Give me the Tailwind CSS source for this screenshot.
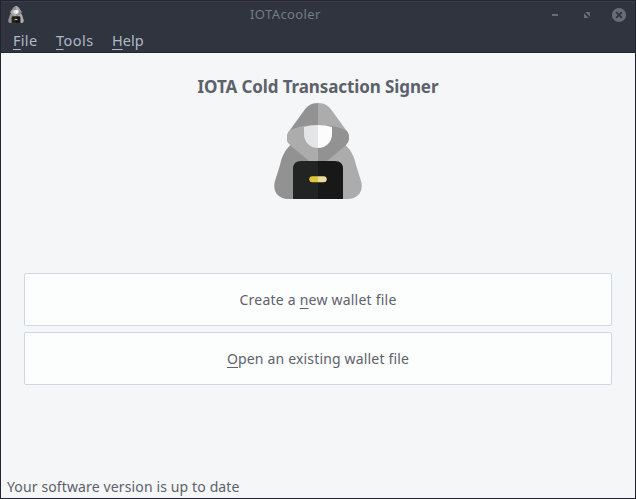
<!DOCTYPE html>
<html lang="en">
<head>
<meta charset="utf-8">
<title>IOTAcooler</title>
<script src="https://cdn.jsdelivr.net/npm/@tailwindcss/browser@4"></script>
</head>
<body class="w-[636px] h-[499px] overflow-hidden bg-[#22232e] font-['Noto_Sans',sans-serif] text-[14px] leading-5 text-[#5c616c]">
<svg class="hidden">
  <symbol id="hood" viewBox="0 0 88 96">
    <path fill="#929292" d="M44 40H19C11 46 8 53 6 62L1 78C-2 88 4 96 14 96H44Z"/>
    <path fill="#acacac" d="M44 40H69C77 46 80 53 82 62L87 78C90 88 84 96 74 96H44Z"/>
    <path fill="#929292" d="M44 0C37 0 33 3 29 9L16 27C12 32 13 36 14 40L44 30Z"/>
    <path fill="#acacac" d="M44 0C51 0 55 3 59 9L72 27C76 32 75 36 74 40L44 30Z"/>
    <path fill="#acacac" d="M44 22C31 22 22 24 15 28C12 32 12 39 17 43L35 58H44Z"/>
    <path fill="#929292" d="M44 22C57 22 66 24 73 28C76 32 76 39 71 43L53 58H44Z"/>
    <path fill="#e4e5e7" d="M44 22Q36 22 30 24V31C30 39 36 45 44 45Z"/>
    <path fill="#fcfcfd" d="M44 22Q52 22 58 24V31C58 39 52 45 44 45Z"/>
    <path fill="#222423" d="M44 58H27Q19 58 19 66V96H44Z"/>
    <path fill="#181818" d="M44 58H61Q69 58 69 66V96H44Z"/>
    <path fill="#e2c53e" d="M44 73.2H38.3A3 3 0 0 0 38.3 79.2H44Z"/>
    <path fill="#ecdc9c" d="M44 73.2H49.7A3 3 0 0 1 49.7 79.2H44Z"/>
  </symbol>
</svg>
<div class="flex h-full flex-col px-px pb-px">
  <header class="flex h-[53px] shrink-0 flex-col border-t border-b border-t-[#22232e] border-b-[#252632] bg-[#2f343f] text-[#afb8c6]">
    <div class="grid h-[26px] grid-cols-[1fr_auto_1fr] items-center border-t border-[#3a3f4a]">
      <svg class="ml-[7px] h-[17px] w-4"><use href="#hood"/></svg>
      <span class="-ml-[65px] w-[71px] pb-[2px] text-[13px] tracking-[0.4px] text-[#767b87]"><span class="whitespace-nowrap">IOTAcooler</span></span>
      <div class="flex items-center justify-end gap-4 pr-2">
        <svg class="h-4 w-4" viewBox="0 0 16 16"><path fill="#676c77" d="M5 7h6v2H5z"/></svg>
        <svg class="h-4 w-4" viewBox="0 0 16 16"><path fill="#676c77" d="M6.3 5H11v4.7zM5 6.3V11h4.7z"/></svg>
        <svg class="h-4 w-4" viewBox="0 0 16 16"><circle cx="8" cy="8" r="7.1" fill="#676c77"/><path stroke="#2f343f" stroke-width="1.8" d="M5.2 5.2l5.6 5.6M10.8 5.2l-5.6 5.6"/></svg>
      </div>
    </div>
    <nav class="flex h-[25px] items-center pl-3 text-[14.5px] tracking-[0.3px]">
      <span class="w-[43px]"><u class="underline decoration-1 underline-offset-[3px]">F</u>ile</span>
      <span class="w-14 tracking-[0.5px]"><u class="underline decoration-1 underline-offset-[3px]">T</u>ools</span>
      <span class="tracking-[0px]"><u class="underline decoration-1 underline-offset-[3px]">H</u>elp</span>
    </nav>
  </header>
  <main class="flex grow flex-col bg-[#f5f6f7]">
    <h1 class="mt-6 text-center text-[17px] leading-5 font-bold tracking-[-0.1px]">IOTA Cold Transaction Signer</h1>
    <svg class="mx-auto mt-[6px] h-24 w-[88px]"><use href="#hood"/></svg>
    <div class="mt-[74px] flex flex-col gap-[6px] px-[23px]">
      <button class="h-[53px] rounded-[2px] border border-[#cfd6e6] bg-[#fcfdfd] tracking-[0.22px]">Create a <u class="underline decoration-1 underline-offset-[3px]">n</u>ew wallet file</button>
      <button class="h-[53px] rounded-[2px] border border-[#cfd6e6] bg-[#fcfdfd] tracking-[0.17px]"><u class="underline decoration-1 underline-offset-[3px]">O</u>pen an existing wallet file</button>
    </div>
    <footer class="mt-auto mb-[1px] pl-[6px] tracking-[0.13px]">Your software version is up to date</footer>
  </main>
</div>
</body>
</html>
